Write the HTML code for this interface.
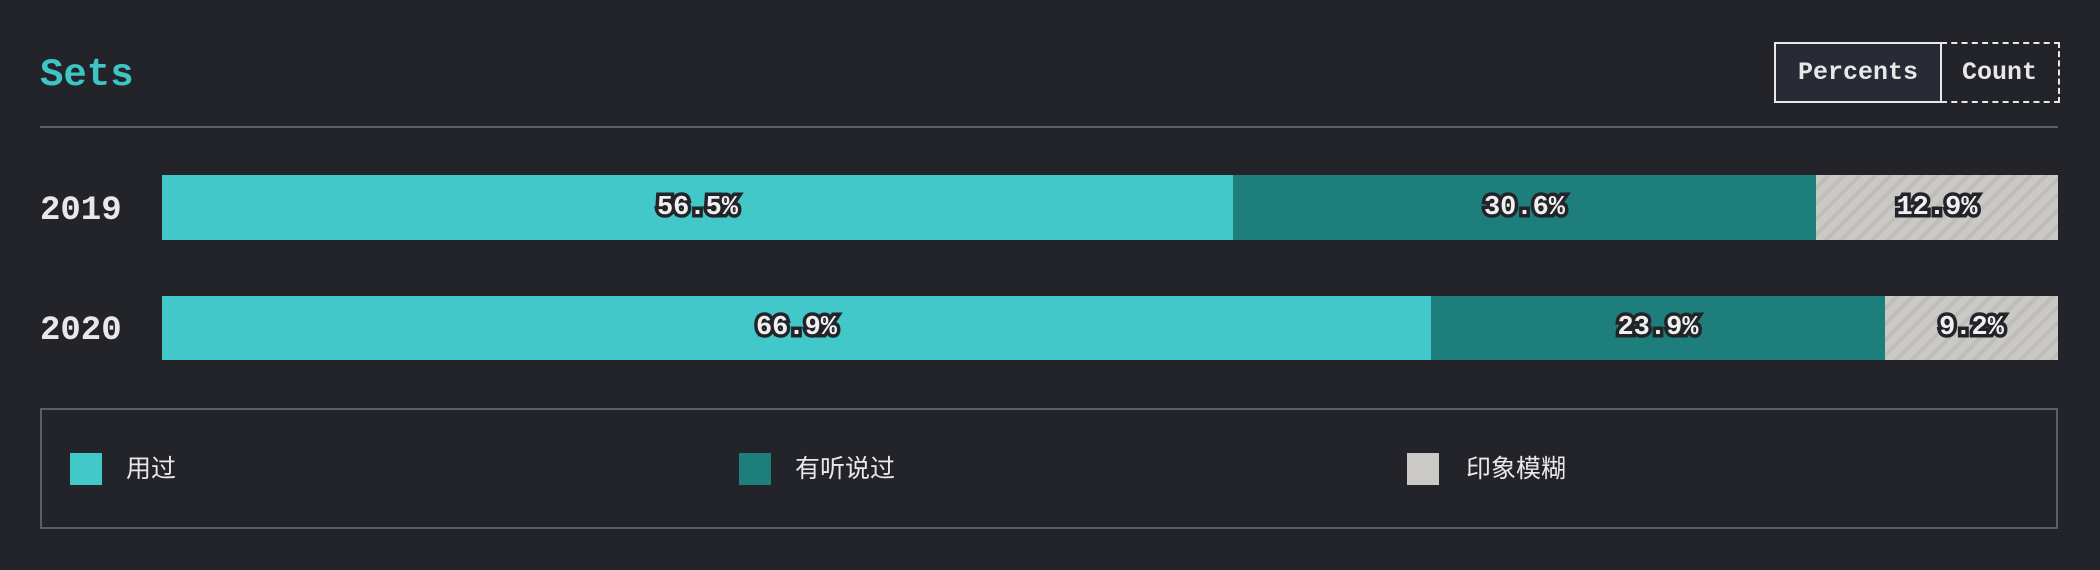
<!DOCTYPE html>
<html><head><meta charset="utf-8"><style>
body{margin:0;width:2100px;height:570px;background:#232429;position:relative;overflow:hidden;font-family:"Liberation Mono",monospace;}
.abs{position:absolute}
.title{left:40px;top:51px;font-size:39px;font-weight:bold;color:#3ec6c6;line-height:48px}
.div{left:40px;top:126px;width:2018px;height:2px;background:#5a5e66}
.btn{top:42px;height:61px;box-sizing:border-box;color:#e8e8e8;font-weight:bold;font-size:25px;display:flex;align-items:center;justify-content:center}
.year{left:40px;font-size:34px;font-weight:bold;color:#e8e8e8;line-height:40px}
.seg{position:absolute;top:0;height:100%;display:flex;align-items:center;justify-content:center}
.lab{font-size:27px;font-weight:bold;color:#f0f0f0;-webkit-text-stroke:7px #232429;paint-order:stroke fill;}
.s1{background:#42c8c9}.s2{background:#1d7e7b}
.s3{background:repeating-linear-gradient(135deg,#cac9c5 0 7px,#bebdb9 7px 11px)}
.bar{left:162px;width:1896px;position:absolute}
.leg{left:40px;top:408px;width:2018px;height:121px;box-sizing:border-box;border:2px solid #5a5e66}
.sw{width:32px;height:32px;top:453px}
.lt{top:452px;font-family:"Liberation Sans","Noto Sans CJK SC",sans-serif;font-size:25px;color:#e8e8e8;line-height:34px}
</style></head><body>
<div class="abs title">Sets</div>
<div class="abs btn" style="left:1774px;width:168px;border:2px solid #e8e8e8;background:#282b35">Percents</div>
<div class="abs btn" style="left:1941px;width:119px;border:2px dashed #e8e8e8;border-left:none">Count</div>
<div class="abs div"></div>

<div class="abs year" style="top:191px">2019</div>
<div class="bar" style="top:175px;height:65px">
<div class="seg s1" style="left:0;width:1071px"><span class="lab">56.5%</span></div>
<div class="seg s2" style="left:1071px;width:583px"><span class="lab">30.6%</span></div>
<div class="seg s3" style="left:1654px;width:242px"><span class="lab">12.9%</span></div>
</div>

<div class="abs year" style="top:311px">2020</div>
<div class="bar" style="top:296px;height:64px">
<div class="seg s1" style="left:0;width:1269px"><span class="lab">66.9%</span></div>
<div class="seg s2" style="left:1269px;width:454px"><span class="lab">23.9%</span></div>
<div class="seg s3" style="left:1723px;width:173px"><span class="lab">9.2%</span></div>
</div>

<div class="abs leg"></div>
<div class="abs sw" style="left:70px;background:#42c8c9"></div>
<div class="abs lt" style="left:126px">用过</div>
<div class="abs sw" style="left:739px;background:#1d7e7b"></div>
<div class="abs lt" style="left:795px">有听说过</div>
<div class="abs sw" style="left:1407px;background:#cac9c5"></div>
<div class="abs lt" style="left:1466px">印象模糊</div>
</body></html>
